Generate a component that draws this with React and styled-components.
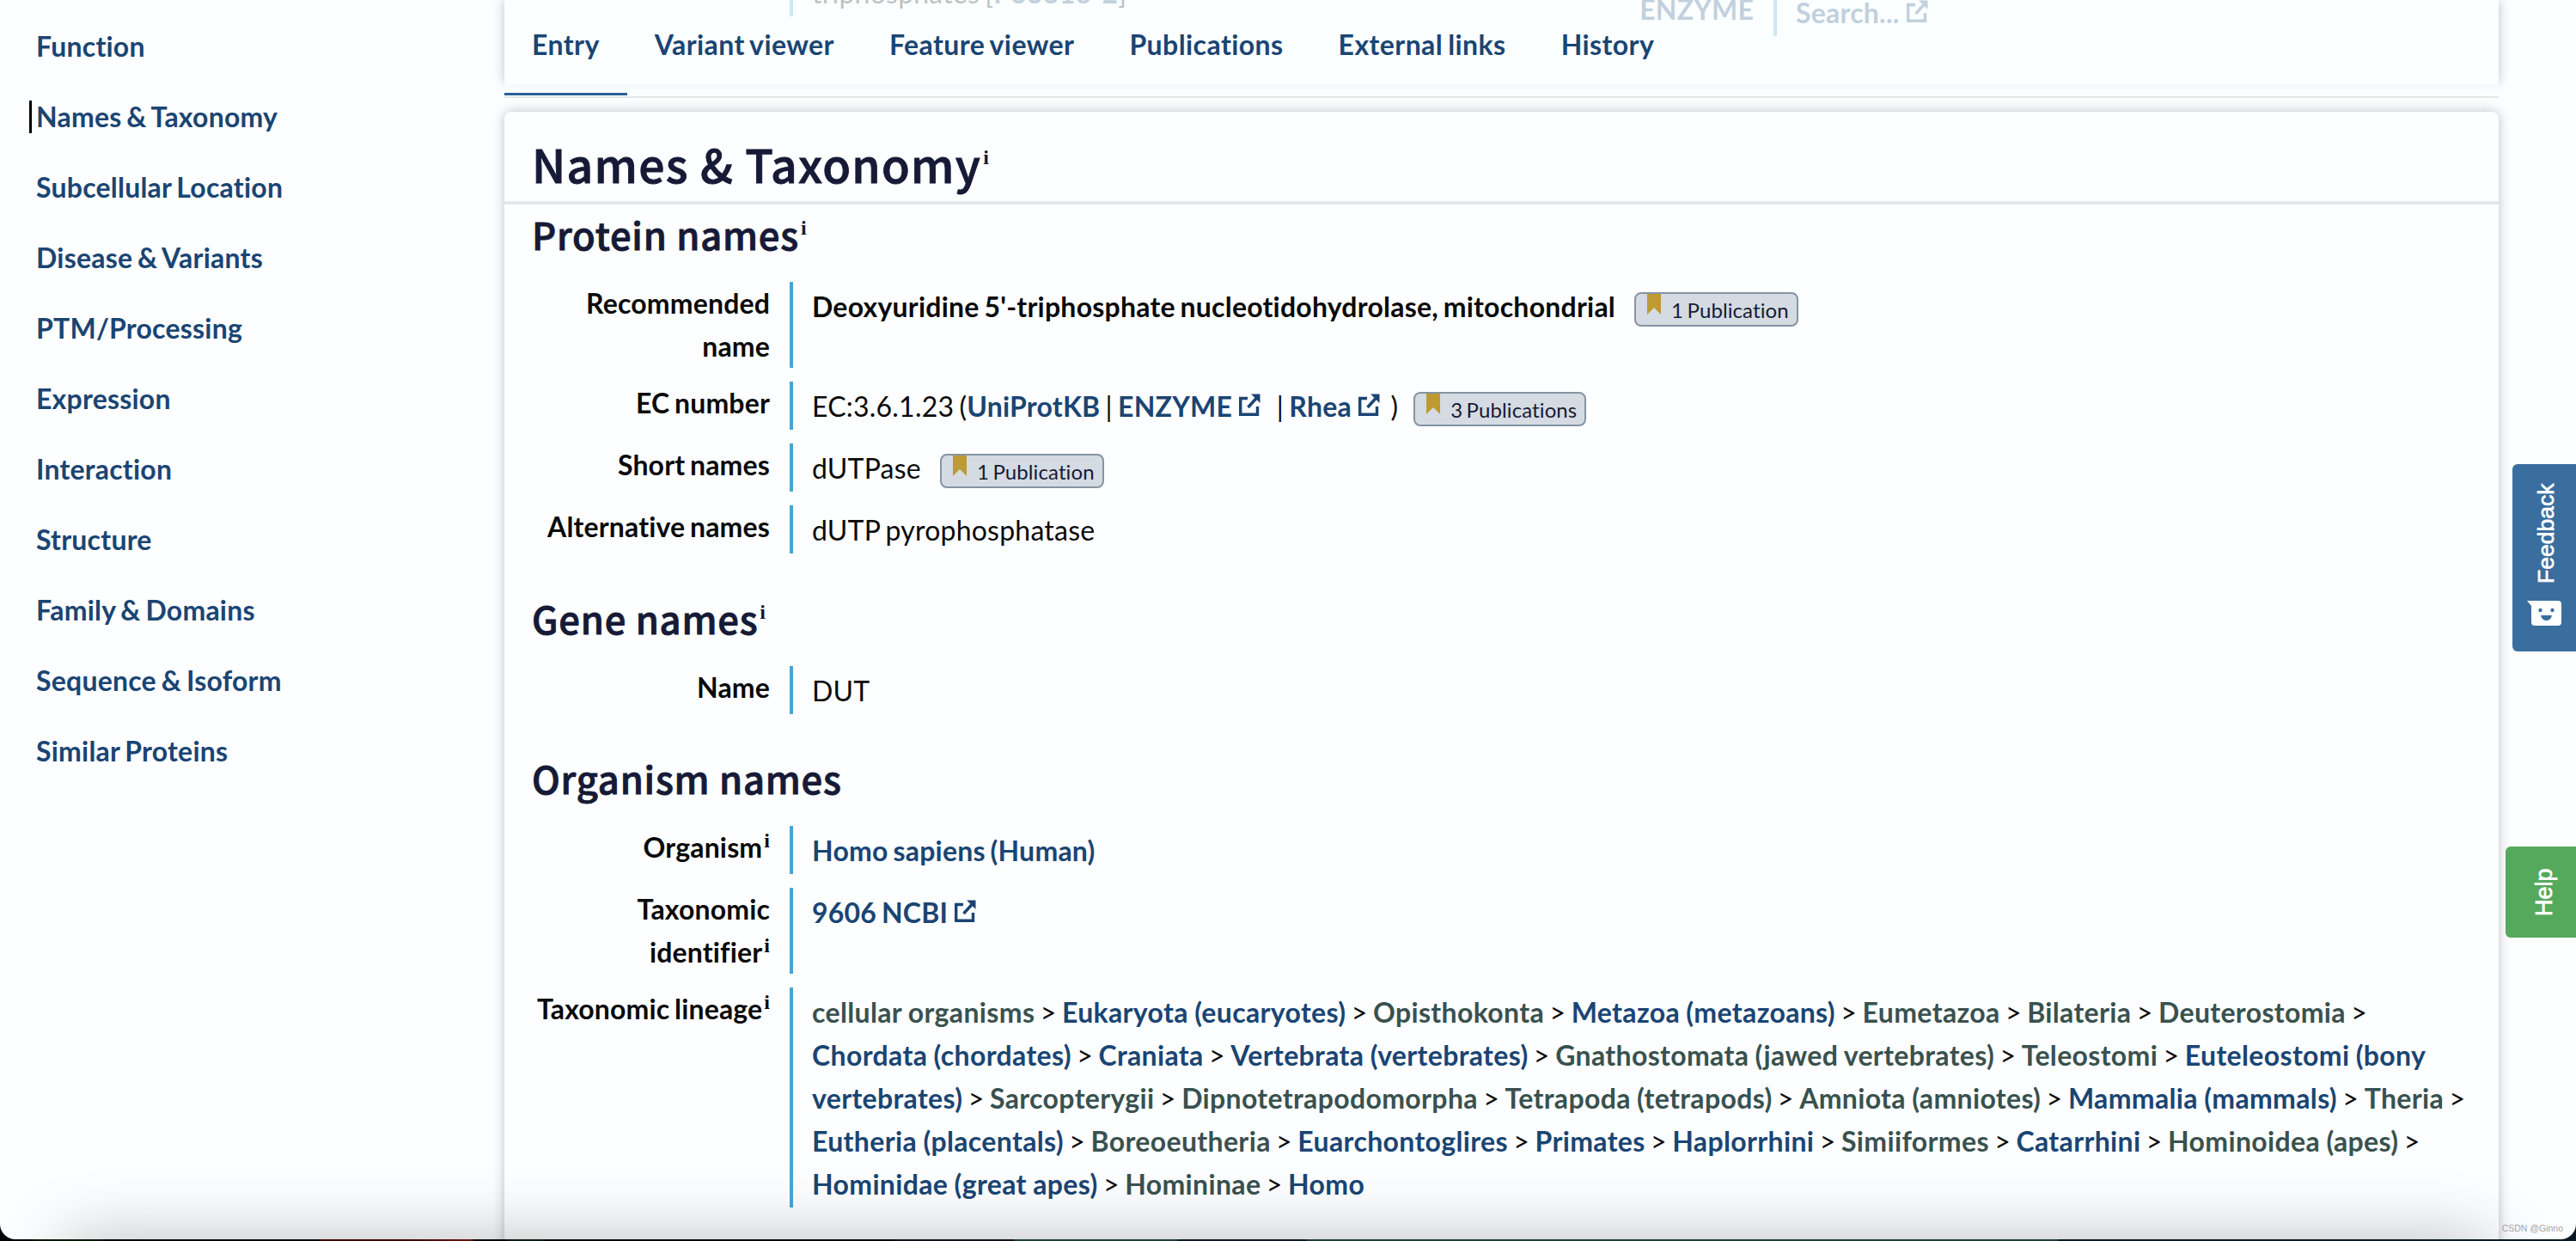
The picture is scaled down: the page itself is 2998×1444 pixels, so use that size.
import React from "react";
import styled, { createGlobalStyle, css } from "styled-components";

const colors = {
  page: "#fdfeff",
  link: "#1a4573",
  muted: "#39514f",
  text: "#0a0a0a",
  heading: "#161a36",
  rule: "#e4e6e8",
  bar: "#4aa4d3",
};

const GlobalStyle = createGlobalStyle`
  html, body { margin: 0; padding: 0; overflow: hidden; }
  body { background: #04060c; }
  *, *::before, *::after { box-sizing: border-box; }
`;

const Desktop = styled.div`
  width: 2998px;
  height: 1444px;
  overflow: hidden;
  background: linear-gradient(
    90deg,
    #030405 0 40px,
    #0a1a08 40px 120px,
    #04060c 120px 373px,
    #3f0a08 373px 480px,
    #6b1210 550px,
    #04060c 551px 590px,
    #0b1c10 591px 632px,
    #04060c 633px 1040px,
    #14121c 1041px 1180px,
    #1f3d3a 1181px 1370px,
    #0f1a26 1371px 1520px,
    #1f3d3a 1521px 2395px,
    #0a1a24 2396px
  );
`;

const Window = styled.div`
  position: relative;
  display: flex;
  height: 1442px;
  overflow: hidden;
  background: ${colors.page};
  border-radius: 0 0 18px 18px;
  font-family: Lato, "Liberation Sans", sans-serif;
  font-size: 32px;
  line-height: 50px;
  letter-spacing: 0.22px;
  word-spacing: -2.2px;
  color: ${colors.text};
`;

const Sidebar = styled.nav`
  display: flex;
  flex-direction: column;
  gap: 44px;
  flex: none;
  width: 587px;
  padding: 35px 0 0 34px;
`;

const SideLink = styled.a`
  height: 38px;
  line-height: 38px;
  padding-left: 5px;
  border-left: 3px solid ${(p) => (p.$active ? "#000" : "transparent")};
  color: ${colors.link};
  font-weight: 700;
`;

const Main = styled.main`
  flex: none;
  width: 2321px;
`;

const cardShadow = css`
  box-shadow: 0 0 14px rgba(26, 28, 60, 0.28);
`;

const Header = styled.header`
  position: relative;
  height: 114px;
  margin-bottom: 16px;
`;

const HeaderCard = styled.div`
  display: grid;
  grid-template-columns: 1145px 1fr;
  align-items: start;
  height: 98px;
  padding: 0 32px;
  border-radius: 0 0 8px 8px;
  background: ${colors.page};
  ${cardShadow}
`;

const HeaderCell = styled.div`
  margin-top: ${(p) => p.$offset}px;
`;

const TabBar = styled.div`
  position: absolute;
  inset: 0;
  display: flex;
  border-bottom: 2px solid ${colors.rule};
  background: rgba(250, 255, 255, 0.75);
`;

const Tab = styled.a`
  height: 111px;
  padding: 2px 32px 0;
  border-bottom: 3px solid ${(p) => (p.$active ? "#2a6199" : "transparent")};
  color: ${colors.link};
  font-weight: 700;
  line-height: 100px;
  letter-spacing: 0.43px;
  white-space: nowrap;
`;

const Card = styled.section`
  height: 1400px;
  border-radius: 8px 8px 0 0;
  background: ${colors.page};
  ${cardShadow}
`;

const headingFont = css`
  margin: 0;
  font-family: "Noto Sans CJK SC", "Noto Sans", sans-serif;
  font-weight: 500;
  word-spacing: 0;
  color: ${colors.heading};
  -webkit-text-stroke: 0.9px ${colors.heading};
  white-space: nowrap;
`;

const Title = styled.h2`
  ${headingFont}
  height: 108px;
  padding: 21px 32px 0;
  border-bottom: 4px solid ${colors.rule};
  font-size: 53.5px;
  letter-spacing: 1.25px;
  line-height: 78px;
`;

const Subtitle = styled.h3`
  ${headingFont}
  height: 90px;
  padding-top: 5px;
  font-size: 43.5px;
  letter-spacing: 0.8px;
  line-height: 60px;
`;

const Body = styled.div`
  padding: 0 32px;
`;

const Group = styled.div`
  margin-bottom: ${(p) => p.$gap || 40}px;
`;

const Rows = styled.div`
  display: grid;
  row-gap: 16px;
`;

const RowGrid = styled.div`
  display: grid;
  grid-template-columns: 277px 1fr;
  column-gap: 23px;
`;

const Label = styled.div`
  font-weight: 700;
  text-align: right;
  letter-spacing: 0.15px;
  ${(p) => p.$link && `color: ${colors.link};`}
`;

const Value = styled.div`
  padding: 4px 0 2px 22px;
  border-left: 4px solid ${colors.bar};
  font-weight: ${(p) => (p.$bold ? 700 : 400)};
`;

const Lineage = styled.span`
  letter-spacing: 0.35px;

  a {
    word-spacing: -0.8px;
  }
`;

const Info = styled.sup`
  position: relative;
  top: -${(p) => p.$rise}px;
  margin-left: ${(p) => p.$gap || 2}px;
  vertical-align: baseline;
  font-family: "Liberation Serif", serif;
  font-size: 24px;
  font-weight: 700;
  line-height: 0;
  letter-spacing: 0;
  -webkit-text-stroke: 0;
`;

const Link = styled.a`
  color: ${(p) => (p.$muted ? colors.muted : colors.link)};
  font-weight: 700;
`;

const ExternalSvg = styled.svg`
  width: 25px;
  height: 26px;
  margin-left: ${(p) => p.$gap || 8}px;
  vertical-align: 1px;
  fill: none;
  stroke: ${colors.link};
  stroke-width: 3.4;
`;

const Badge = styled.button`
  display: inline-flex;
  align-items: flex-start;
  height: 40px;
  margin: 0 0 0 ${(p) => p.$gap || 22}px;
  padding: 0 9px 0 13px;
  border: 2px solid #8594a3;
  border-radius: 8px;
  background: #d5dbe2;
  color: ${colors.heading};
  font: 400 24px/38px Lato, "Liberation Sans", sans-serif;
  letter-spacing: 0.1px;
  word-spacing: -1.8px;
  vertical-align: 3px;
  white-space: nowrap;
`;

const Bookmark = styled.svg`
  width: 16px;
  height: 24px;
  margin-right: 12px;
  fill: #bd9b32;
`;

const SideButton = styled.button`
  position: absolute;
  right: 0;
  top: ${(p) => p.$top}px;
  display: flex;
  align-items: center;
  justify-content: center;
  gap: 20px;
  width: ${(p) => p.$width}px;
  height: ${(p) => p.$height}px;
  padding: ${(p) => p.$padding};
  border: 0;
  border-radius: 0 6px 6px 0;
  background: ${(p) => p.$color};
  color: #fff;
  font: 400 ${(p) => p.$size}px/32px "Liberation Sans", Arial, sans-serif;
  letter-spacing: 0;
  -webkit-text-stroke: 0.7px #fff;
  writing-mode: vertical-rl;
  transform: rotate(180deg);
`;

const SideText = styled.span`
  margin-right: ${(p) => p.$shift}px;
`;

const Smile = styled.svg`
  flex: none;
  width: 40px;
  height: 29px;
  transform: rotate(180deg);
`;

const DockShadow = styled.div`
  position: absolute;
  left: 76px;
  right: 100px;
  top: 1442px;
  height: 100px;
  box-shadow: 0 0 80px rgba(0, 0, 0, 0.26);
  pointer-events: none;
`;

const Watermark = styled.div`
  position: absolute;
  right: 15px;
  bottom: 6px;
  color: #a3a3a6;
  font: 10.5px/14px "Liberation Sans", Arial, sans-serif;
  letter-spacing: 0;
  word-spacing: 0;
`;

const External = ({ gap }) => (
  <ExternalSvg $gap={gap} viewBox="0 0 25 26">
    <path d="M10 5.5H1.7V24.3H21.5V15" />
    <path d="M10.5 16L21 4.5" />
    <path d="M14 0.5H24.5V11Z" fill={colors.link} stroke="none" />
  </ExternalSvg>
);

const Publications = ({ count, gap }) => (
  <Badge $gap={gap}>
    <Bookmark viewBox="0 0 16 24">
      <path d="M0 0H16V24L8 16L0 24Z" />
    </Bookmark>
    {`${count} ${count === 1 ? "Publication" : "Publications"}`}
  </Badge>
);

const Row = ({ label, info, link, bold, children }) => (
  <RowGrid>
    <Label $link={link}>
      {label}
      {info && <Info $rise={12}>i</Info>}
    </Label>
    <Value $bold={bold}>{children}</Value>
  </RowGrid>
);

const sections = [
  "Function",
  "Names & Taxonomy",
  "Subcellular Location",
  "Disease & Variants",
  "PTM/Processing",
  "Expression",
  "Interaction",
  "Structure",
  "Family & Domains",
  "Sequence & Isoform",
  "Similar Proteins",
];

const tabs = [
  "Entry",
  "Variant viewer",
  "Feature viewer",
  "Publications",
  "External links",
  "History",
];

const lineage = [
  ["cellular organisms", true],
  ["Eukaryota (eucaryotes)"],
  ["Opisthokonta", true],
  ["Metazoa (metazoans)"],
  ["Eumetazoa", true],
  ["Bilateria", true],
  ["Deuterostomia", true],
  ["Chordata (chordates)"],
  ["Craniata"],
  ["Vertebrata (vertebrates)"],
  ["Gnathostomata (jawed vertebrates)", true],
  ["Teleostomi", true],
  ["Euteleostomi (bony vertebrates)"],
  ["Sarcopterygii", true],
  ["Dipnotetrapodomorpha", true],
  ["Tetrapoda (tetrapods)", true],
  ["Amniota (amniotes)", true],
  ["Mammalia (mammals)"],
  ["Theria", true],
  ["Eutheria (placentals)"],
  ["Boreoeutheria", true],
  ["Euarchontoglires"],
  ["Primates"],
  ["Haplorrhini"],
  ["Simiiformes", true],
  ["Catarrhini"],
  ["Hominoidea (apes)", true],
  ["Hominidae (great apes)"],
  ["Homininae", true],
  ["Homo"],
];

export default function App() {
  return (
    <Desktop>
      <GlobalStyle />
      <Window>
        <Sidebar>
          {sections.map((s) => (
            <SideLink key={s} $active={s === "Names & Taxonomy"}>
              {s}
            </SideLink>
          ))}
        </Sidebar>
        <Main>
          <Header>
            <HeaderCard>
              <HeaderCell $offset={-37}>
                <Row label="">
                  triphosphates [<Link>P33316-2</Link>]
                </Row>
              </HeaderCell>
              <HeaderCell $offset={-14}>
                <Row label="ENZYME" link>
                  <Link>
                    Search...
                    <External />
                  </Link>
                </Row>
              </HeaderCell>
            </HeaderCard>
            <TabBar>
              {tabs.map((t) => (
                <Tab key={t} $active={t === "Entry"}>
                  {t}
                </Tab>
              ))}
            </TabBar>
          </Header>
          <Card>
            <Title>
              Names &amp; Taxonomy<Info $rise={22}>i</Info>
            </Title>
            <Body>
              <Group $gap={41}>
                <Subtitle>
                  Protein names<Info $rise={18}>i</Info>
                </Subtitle>
                <Rows>
                  <Row label="Recommended name" bold>
                    Deoxyuridine 5'-triphosphate nucleotidohydrolase, mitochondrial
                    <Publications count={1} />
                  </Row>
                  <Row label="EC number">
                    EC:3.6.1.23 (<Link>UniProtKB</Link> |{" "}
                    <Link>
                      ENZYME
                      <External />
                    </Link>
                    {"\u00a0 \u00a0"}|{" "}
                    <Link>
                      Rhea
                      <External />
                    </Link>
                    {"\u00a0 "})
                    <Publications count={3} gap={18} />
                  </Row>
                  <Row label="Short names">
                    dUTPase
                    <Publications count={1} />
                  </Row>
                  <Row label="Alternative names">dUTP pyrophosphatase</Row>
                </Rows>
              </Group>
              <Group>
                <Subtitle>
                  Gene names<Info $rise={18}>i</Info>
                </Subtitle>
                <Rows>
                  <Row label="Name">DUT</Row>
                </Rows>
              </Group>
              <Group>
                <Subtitle>Organism names</Subtitle>
                <Rows>
                  <Row label="Organism" info>
                    <Link>Homo sapiens (Human)</Link>
                  </Row>
                  <Row label="Taxonomic identifier" info>
                    <Link>
                      9606 NCBI
                      <External />
                    </Link>
                  </Row>
                  <Row label="Taxonomic lineage" info>
                    <Lineage>
                      {lineage.map(([name, muted], i) => (
                        <React.Fragment key={name}>
                          {i > 0 && " > "}
                          <Link $muted={muted}>{name}</Link>
                        </React.Fragment>
                      ))}
                    </Lineage>
                  </Row>
                </Rows>
              </Group>
            </Body>
          </Card>
        </Main>
        <DockShadow />
        <SideButton $top={539.5} $width={74} $height={218} $size={26.5} $padding="8px 0 0" $color="#3a6e9f">
          <Smile viewBox="0 0 40 29">
            <path
              fill="#fff"
              d="M0 0H36Q40 0 40 4V25Q40 29 36 29H9Q5 29 5 25V6Z"
            />
            <circle cx="15.5" cy="11" r="2.2" fill="#3a6e9f" />
            <circle cx="29.5" cy="11" r="2.2" fill="#3a6e9f" />
            <path d="M16 17H29Q27.5 23 22.5 23T16 17Z" fill="#3a6e9f" />
          </Smile>
          <SideText $shift={4}>Feedback</SideText>
        </SideButton>
        <SideButton $top={985} $width={82} $height={106} $size={27} $padding="0" $color="#55a95c">
          <SideText $shift={7}>Help</SideText>
        </SideButton>
        <Watermark>CSDN @Ginno</Watermark>
      </Window>
    </Desktop>
  );
}
